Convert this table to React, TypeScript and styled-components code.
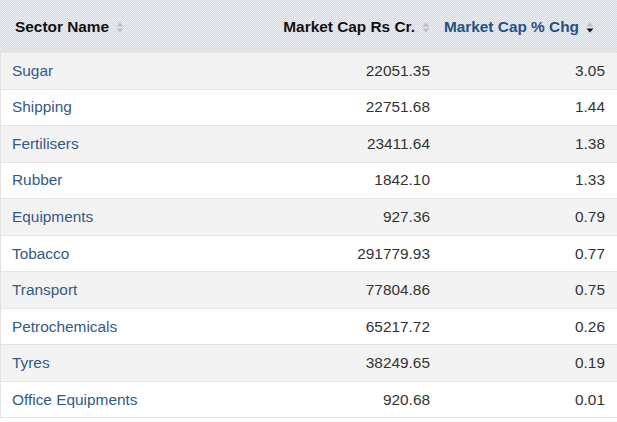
import React from "react";
import styled, { createGlobalStyle } from "styled-components";

const Global = createGlobalStyle`
  html, body { margin: 0; padding: 0; background: #fff; }
  body { font-family: "Liberation Sans", Arial, sans-serif; }
`;

const Table = styled.div`
  width: 617px;
  display: grid;
  grid-template-columns: 1fr 188px 179px;
  font-size: 15.4px;
`;

const HeadCell = styled.div<{ $align: "left" | "right"; $active?: boolean; $pr: number; $pl: number }>`
  height: 53px;
  box-sizing: border-box;
  display: flex;
  align-items: center;
  justify-content: ${(p) => (p.$align === "left" ? "flex-start" : "flex-end")};
  gap: 7px;
  padding: 2px ${(p) => p.$pr}px 0 ${(p) => p.$pl}px;
  font-weight: bold;
  color: ${(p) => (p.$active ? "#24508a" : "#111")};
  background-color: #dfe4ea;
  background-image: repeating-conic-gradient(#d5dce4 0 25%, #e9edf1 0 50%);
  background-size: 2px 2px;
  border-bottom: 1px solid #e8e8e8;
  white-space: nowrap;
`;

const Cell = styled.div<{ $align: "left" | "right"; $odd: boolean; $pr: number; $first?: boolean }>`
  height: 36.56px;
  box-sizing: border-box;
  display: flex;
  align-items: center;
  justify-content: ${(p) => (p.$align === "left" ? "flex-start" : "flex-end")};
  padding: 0 ${(p) => p.$pr}px 0 ${(p) => (p.$first ? 11 : 0)}px;
  background: ${(p) => (p.$odd ? "#f3f3f3" : "#fff")};
  border-bottom: 1px solid #e4e4e4;
  border-left: ${(p) => (p.$first ? "1px solid #e2e2e2" : "none")};
  color: ${(p) => (p.$align === "left" ? "#345a86" : "#333")};
  white-space: nowrap;
`;

const SortIcon = ({ active }: { active?: boolean }) => (
  <svg width="8" height="11" viewBox="0 0 8 11" aria-hidden="true">
    <path d="M4 0.5 L7.5 4.5 L0.5 4.5 Z" fill="#b9bec4" />
    <path d="M0.5 6.5 L7.5 6.5 L4 10.5 Z" fill={active ? "#111" : "#b9bec4"} />
  </svg>
);

const rows: [string, string, string][] = [
  ["Sugar", "22051.35", "3.05"],
  ["Shipping", "22751.68", "1.44"],
  ["Fertilisers", "23411.64", "1.38"],
  ["Rubber", "1842.10", "1.33"],
  ["Equipments", "927.36", "0.79"],
  ["Tobacco", "291779.93", "0.77"],
  ["Transport", "77804.86", "0.75"],
  ["Petrochemicals", "65217.72", "0.26"],
  ["Tyres", "38249.65", "0.19"],
  ["Office Equipments", "920.68", "0.01"],
];

export default function App() {
  return (
    <>
      <Global />
      <Table>
        <HeadCell $align="left" $pl={15} $pr={0}>
          Sector Name <SortIcon />
        </HeadCell>
        <HeadCell $align="right" $pl={0} $pr={8}>
          Market Cap Rs Cr. <SortIcon />
        </HeadCell>
        <HeadCell $align="right" $active $pl={0} $pr={23}>
          Market Cap % Chg <SortIcon active />
        </HeadCell>
        {rows.map(([name, cap, chg], i) => (
          <React.Fragment key={name}>
            <Cell $align="left" $odd={i % 2 === 0} $pr={0} $first>
              {name}
            </Cell>
            <Cell $align="right" $odd={i % 2 === 0} $pr={8}>
              {cap}
            </Cell>
            <Cell $align="right" $odd={i % 2 === 0} $pr={12}>
              {chg}
            </Cell>
          </React.Fragment>
        ))}
      </Table>
    </>
  );
}
